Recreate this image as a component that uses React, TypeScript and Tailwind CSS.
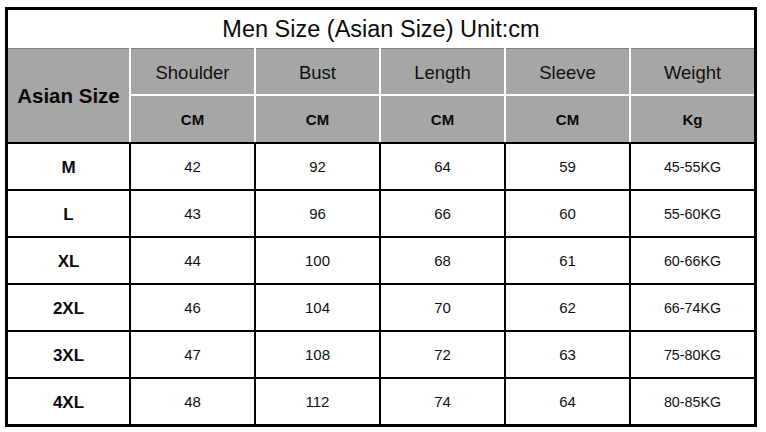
const columns = [
  { name: "Shoulder", unit: "CM" },
  { name: "Bust", unit: "CM" },
  { name: "Length", unit: "CM" },
  { name: "Sleeve", unit: "CM" },
  { name: "Weight", unit: "Kg" },
];

const rows = [
  { size: "M", values: ["42", "92", "64", "59", "45-55KG"] },
  { size: "L", values: ["43", "96", "66", "60", "55-60KG"] },
  { size: "XL", values: ["44", "100", "68", "61", "60-66KG"] },
  { size: "2XL", values: ["46", "104", "70", "62", "66-74KG"] },
  { size: "3XL", values: ["47", "108", "72", "63", "75-80KG"] },
  { size: "4XL", values: ["48", "112", "74", "64", "80-85KG"] },
];

export default function App() {
  return (
    <div
      className="w-[766px] h-[432px] bg-white overflow-hidden pt-[7px] pl-[5px]"
      style={{ fontFamily: '"Liberation Sans", Arial, sans-serif' }}
    >
      <div className="w-[752px] border-[3px] border-black bg-white">
        {/* Title */}
        <div className="h-[38px] pt-[2px] flex items-center justify-center text-[23.5px] text-[#0a0a0a]">
          Men Size (Asian Size) Unit:cm
        </div>

        {/* Header */}
        <div className="grid grid-cols-[121px_repeat(5,1fr)] grid-rows-[46px_46px] gap-x-[2px] gap-y-[2px] bg-white">
          <div className="row-span-2 bg-[#a6a6a6] border-t border-[#7d7d7d] flex items-center justify-center pt-[2px] font-bold text-[20.5px] text-[#0a0a0a]">
            Asian Size
          </div>
          {columns.map((c) => (
            <div
              key={c.name}
              className="bg-[#a6a6a6] border-t border-[#7d7d7d] flex items-center justify-center pt-[3px] text-[18.5px] text-[#111]"
            >
              {c.name}
            </div>
          ))}
          {columns.map((c) => (
            <div
              key={c.name + "-unit"}
              className="bg-[#a6a6a6] flex items-center justify-center pt-[2px] font-bold text-[15px] text-[#0a0a0a]"
            >
              {c.unit}
            </div>
          ))}
        </div>

        {/* Data */}
        <div className="grid grid-cols-[121px_repeat(5,1fr)] auto-rows-[45px] gap-[2px] bg-black border-t-2 border-black">
          {rows.map((r) => (
            <div key={r.size} className="contents">
              <div className="bg-white flex items-center justify-center pt-[2px] font-bold text-[17px] text-[#0a0a0a]">
                {r.size}
              </div>
              {r.values.map((v, i) => (
                <div
                  key={i}
                  className={
                    i === 4
                      ? "bg-white flex items-center justify-center pt-[2px] text-[14.3px] text-[#111]"
                      : "bg-white flex items-center justify-center pt-[2px] text-[15px] text-[#111]"
                  }
                >
                  {v}
                </div>
              ))}
            </div>
          ))}
        </div>
      </div>
    </div>
  );
}
